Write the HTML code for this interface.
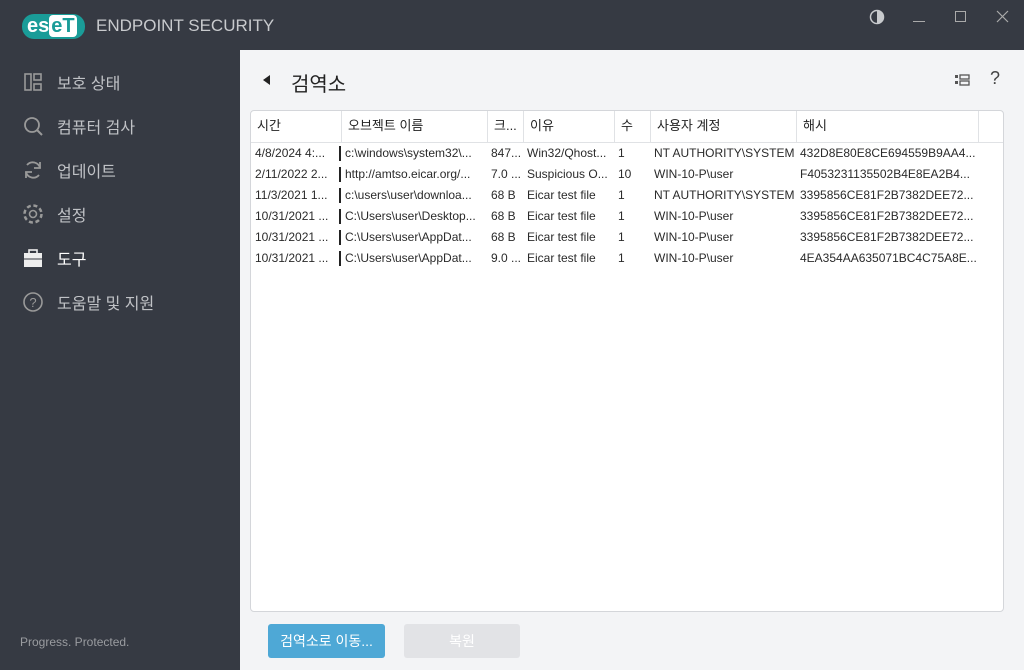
<!DOCTYPE html><html><head><meta charset="utf-8"><style>
*{margin:0;padding:0;box-sizing:border-box}
body{width:1024px;height:670px;overflow:hidden;background:#363a43;font-family:"Liberation Sans","Noto Sans CJK KR",sans-serif;position:relative}
.top{position:absolute;left:0;top:0;width:1024px;height:50px;background:#363a43}
.logo{position:absolute;left:22px;top:14px;width:63px;height:25px;background:#1a9c98;border-radius:12px;color:#fff;font-weight:bold;font-size:20px;line-height:24px;padding-left:5px;letter-spacing:0px}
.logo span{background:#fff;color:#1a9c98;border-radius:4px;padding:0 2px}
.title{position:absolute;left:96px;top:16px;color:#c8cacd;font-size:17px}
.side{position:absolute;left:0;top:50px;width:240px;height:620px}
.item{position:absolute;left:22px;height:24px;color:#c0c2c6;font-size:16px;display:flex;align-items:center}
.item svg{width:22px;height:22px;margin-right:13px}
.main{position:absolute;left:240px;top:50px;width:784px;height:620px;background:#f3f4f6}
h1{position:absolute;left:51px;top:18px;font-size:20px;font-weight:normal;color:#222}
.tbl{position:absolute;left:10px;top:60px;width:754px;height:502px;background:#fff;border:1px solid #d4d6da;border-radius:4px;overflow:hidden}
.hd{position:absolute;top:0;height:32px;border-right:1px solid #e0e2e5;border-bottom:1px solid #e0e2e5;font-size:13px;line-height:30px;padding-left:6px;color:#222}
.c{position:absolute;font-size:12px;color:#2a2a2a;white-space:nowrap;line-height:21px}
.bar{position:absolute;left:88px;width:2px;height:15px;background:#222}
.btn{position:absolute;top:574px;height:34px;border-radius:3px;font-size:14px;line-height:34px;text-align:center}
</style></head><body>
<div class="top">
<div class="logo">es<span>eT</span></div>
<div class="title">ENDPOINT SECURITY</div>
<svg style="position:absolute;left:868px;top:9px" width="18" height="18"><circle cx="9" cy="8" r="6.5" fill="none" stroke="#c8cacd" stroke-width="1.5"/><path d="M9 1.5A6.5 6.5 0 0 1 9 14.5Z" fill="#c8cacd"/></svg>
<div style="position:absolute;left:913px;top:21px;width:12px;height:1px;background:#aaa"></div>
<div style="position:absolute;left:955px;top:11px;width:11px;height:11px;border:1px solid #aaa"></div>
<svg style="position:absolute;left:996px;top:10px" width="13" height="13"><path d="M1 1L12 12M12 1L1 12" stroke="#aaa" stroke-width="1.2"/></svg>
</div>
<div class="side">
<div class="item" style="top:20px"><svg viewBox="0 0 22 22"><rect x="3" y="3" width="6" height="16" fill="none" stroke="#999" stroke-width="1.6"/><rect x="12" y="3" width="7" height="6" fill="none" stroke="#999" stroke-width="1.6"/><rect x="12" y="13" width="7" height="6" fill="none" stroke="#999" stroke-width="1.6"/></svg>보호 상태</div>
<div class="item" style="top:64px"><svg viewBox="0 0 22 22"><circle cx="10" cy="10" r="7" fill="none" stroke="#999" stroke-width="1.8"/><path d="M15 15L20 20" stroke="#999" stroke-width="2"/></svg>컴퓨터 검사</div>
<div class="item" style="top:108px"><svg viewBox="0 0 22 22"><path d="M18 9A7.5 7.5 0 0 0 5 6M4 13A7.5 7.5 0 0 0 17 16" fill="none" stroke="#999" stroke-width="1.8"/><path d="M18 3V9H12M4 19V13H10" fill="none" stroke="#999" stroke-width="1.8"/></svg>업데이트</div>
<div class="item" style="top:152px"><svg viewBox="0 0 22 22"><circle cx="11" cy="11" r="3.5" fill="none" stroke="#999" stroke-width="1.6"/><circle cx="11" cy="11" r="8.5" fill="none" stroke="#999" stroke-width="2.5" stroke-dasharray="4 2.7"/></svg>설정</div>
<div class="item" style="top:196px;color:#fff"><svg viewBox="0 0 22 22"><rect x="2" y="6" width="18" height="14" fill="#eee"/><rect x="7" y="3" width="8" height="4" fill="none" stroke="#eee" stroke-width="1.6"/><path d="M2 12H20" stroke="#363a43"/></svg>도구</div>
<div class="item" style="top:240px"><svg viewBox="0 0 22 22"><circle cx="11" cy="11" r="9" fill="none" stroke="#999" stroke-width="1.6"/><text x="11" y="16" font-size="13" text-anchor="middle" fill="#999" font-family="Liberation Sans">?</text></svg>도움말 및 지원</div>
<div style="position:absolute;left:20px;top:585px;color:#9a9ca0;font-size:12px">Progress. Protected.</div>
</div>
<div class="main">
<svg style="position:absolute;left:23px;top:25px" width="8" height="10"><path d="M7 0V10L0 5Z" fill="#222"/></svg>
<h1>검역소</h1>
<svg style="position:absolute;left:714px;top:24px" width="16" height="12"><rect x="1" y="1" width="3" height="3" fill="#555"/><rect x="1" y="7" width="3" height="3" fill="#555"/><rect x="6" y="1" width="9" height="4" fill="none" stroke="#555" stroke-width="1.3"/><rect x="6" y="7" width="9" height="4" fill="none" stroke="#555" stroke-width="1.3"/></svg>
<div style="position:absolute;left:750px;top:18px;font-size:18px;color:#444">?</div>
<div class="tbl">
<div class="hd" style="left:0;width:91px">시간</div>
<div class="hd" style="left:91px;width:146px">오브젝트 이름</div>
<div class="hd" style="left:237px;width:36px">크...</div>
<div class="hd" style="left:273px;width:91px">이유</div>
<div class="hd" style="left:364px;width:36px">수</div>
<div class="hd" style="left:400px;width:146px">사용자 계정</div>
<div class="hd" style="left:546px;width:182px">해시</div>
<div class="hd" style="left:728px;width:26px;border-right:none"></div>
<div style="position:absolute;top:32px;left:0;right:0">
<div style="position:absolute;top:0"><div class="bar" style="top:3px"></div><div class="c" style="left:4px">4/8/2024 4:...</div><div class="c" style="left:94px">c:\windows\system32\...</div><div class="c" style="left:240px">847...</div><div class="c" style="left:276px">Win32/Qhost...</div><div class="c" style="left:367px">1</div><div class="c" style="left:403px">NT AUTHORITY\SYSTEM</div><div class="c" style="left:549px">432D8E80E8CE694559B9AA4...</div></div>
<div style="position:absolute;top:21px"><div class="bar" style="top:3px"></div><div class="c" style="left:4px">2/11/2022 2...</div><div class="c" style="left:94px">http://amtso.eicar.org/...</div><div class="c" style="left:240px">7.0 ...</div><div class="c" style="left:276px">Suspicious O...</div><div class="c" style="left:367px">10</div><div class="c" style="left:403px">WIN-10-P\user</div><div class="c" style="left:549px">F4053231135502B4E8EA2B4...</div></div>
<div style="position:absolute;top:42px"><div class="bar" style="top:3px"></div><div class="c" style="left:4px">11/3/2021 1...</div><div class="c" style="left:94px">c:\users\user\downloa...</div><div class="c" style="left:240px">68 B</div><div class="c" style="left:276px">Eicar test file</div><div class="c" style="left:367px">1</div><div class="c" style="left:403px">NT AUTHORITY\SYSTEM</div><div class="c" style="left:549px">3395856CE81F2B7382DEE72...</div></div>
<div style="position:absolute;top:63px"><div class="bar" style="top:3px"></div><div class="c" style="left:4px">10/31/2021 ...</div><div class="c" style="left:94px">C:\Users\user\Desktop...</div><div class="c" style="left:240px">68 B</div><div class="c" style="left:276px">Eicar test file</div><div class="c" style="left:367px">1</div><div class="c" style="left:403px">WIN-10-P\user</div><div class="c" style="left:549px">3395856CE81F2B7382DEE72...</div></div>
<div style="position:absolute;top:84px"><div class="bar" style="top:3px"></div><div class="c" style="left:4px">10/31/2021 ...</div><div class="c" style="left:94px">C:\Users\user\AppDat...</div><div class="c" style="left:240px">68 B</div><div class="c" style="left:276px">Eicar test file</div><div class="c" style="left:367px">1</div><div class="c" style="left:403px">WIN-10-P\user</div><div class="c" style="left:549px">3395856CE81F2B7382DEE72...</div></div>
<div style="position:absolute;top:105px"><div class="bar" style="top:3px"></div><div class="c" style="left:4px">10/31/2021 ...</div><div class="c" style="left:94px">C:\Users\user\AppDat...</div><div class="c" style="left:240px">9.0 ...</div><div class="c" style="left:276px">Eicar test file</div><div class="c" style="left:367px">1</div><div class="c" style="left:403px">WIN-10-P\user</div><div class="c" style="left:549px">4EA354AA635071BC4C75A8E...</div></div>
</div>
</div>
<div class="btn" style="left:28px;width:117px;background:#4ea8d6;color:#fff">검역소로 이동...</div>
<div class="btn" style="left:164px;width:116px;background:#e2e3e6;color:#fff">복원</div>
</div>
</body></html>
